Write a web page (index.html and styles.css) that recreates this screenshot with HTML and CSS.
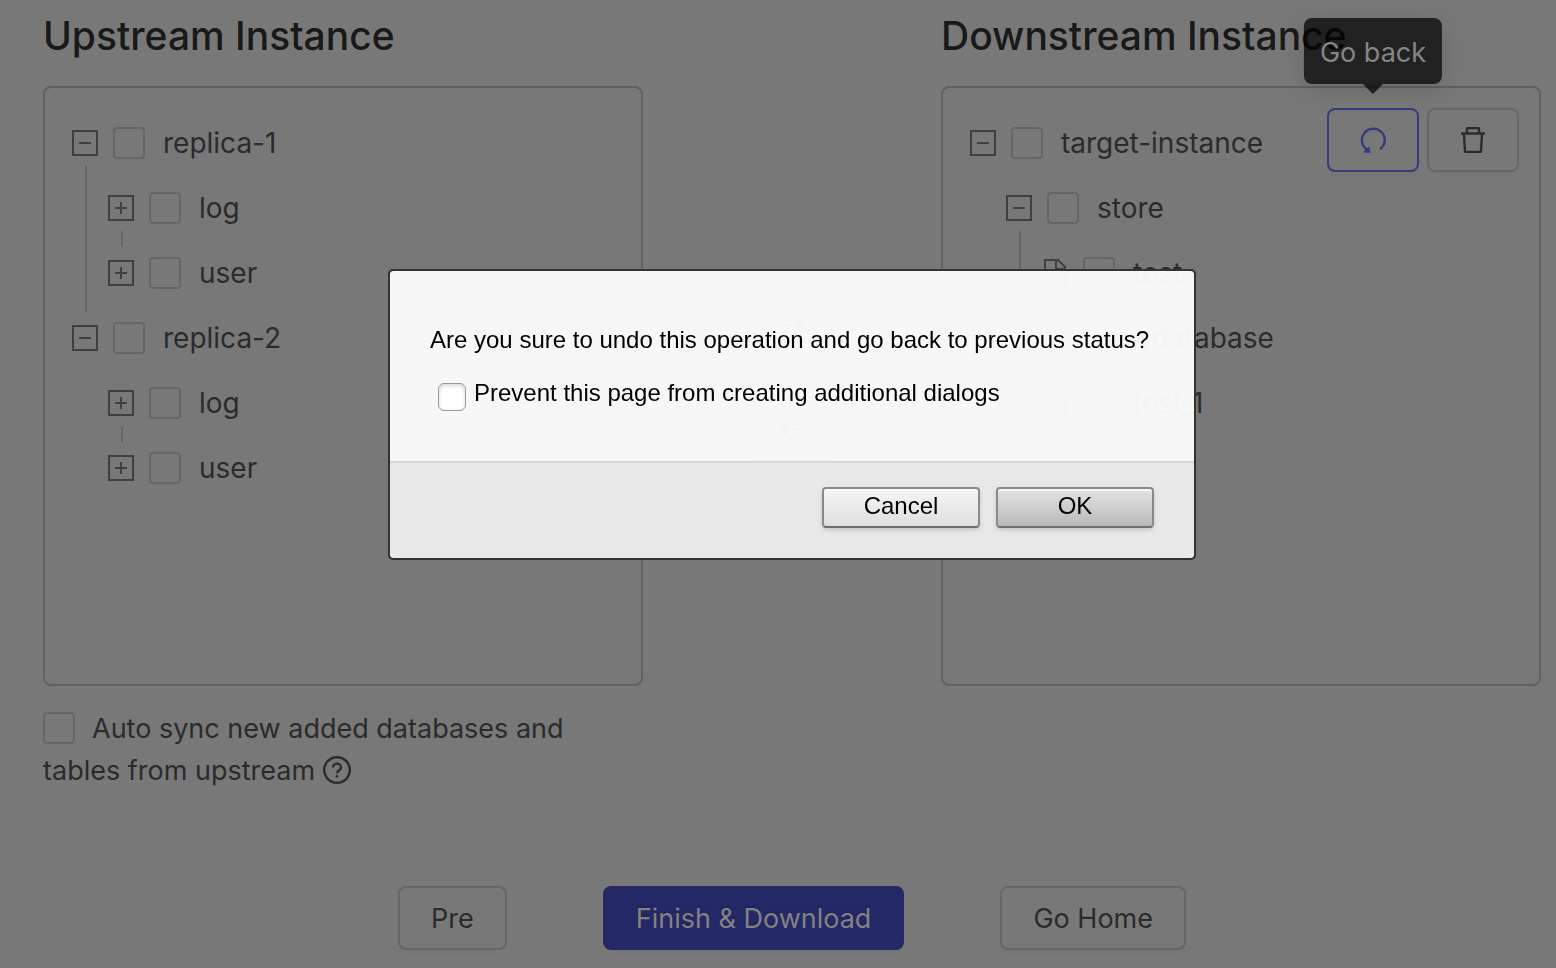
FILE: index.html
```html
<!DOCTYPE html>
<html lang="en">
<head>
<meta charset="utf-8">
<title>Sync instances</title>
<link rel="stylesheet" href="styles.css">
</head>
<body>
<svg class="sprite" aria-hidden="true">
  <symbol id="minus" viewBox="0 0 26 26"><rect x="1" y="1" width="24" height="24"/><path d="M7 13h12"/></symbol>
  <symbol id="plus" viewBox="0 0 26 26"><rect x="1" y="1" width="24" height="24"/><path d="M7 13h12M13 7v12"/></symbol>
  <symbol id="file" viewBox="0 0 26 28"><path d="M3 1h13l7 7v19H3zM14 1v9h9"/></symbol>
</svg>
<main class="page">
  <div class="transfer">
    <section class="column">
      <h1 class="title">Upstream Instance</h1>
      <div class="panel">
        <ul class="tree">
          <li class="node lined">
            <div class="row"><svg class="icon"><use href="#minus"/></svg><label class="item"><input class="check" type="checkbox">replica-1</label></div>
            <ul class="branch">
              <li class="node lined"><div class="row"><svg class="icon"><use href="#plus"/></svg><label class="item"><input class="check" type="checkbox">log</label></div></li>
              <li class="node"><div class="row"><svg class="icon"><use href="#plus"/></svg><label class="item"><input class="check" type="checkbox">user</label></div></li>
            </ul>
          </li>
          <li class="node">
            <div class="row"><svg class="icon"><use href="#minus"/></svg><label class="item"><input class="check" type="checkbox">replica-2</label></div>
            <ul class="branch">
              <li class="node lined"><div class="row"><svg class="icon"><use href="#plus"/></svg><label class="item"><input class="check" type="checkbox">log</label></div></li>
              <li class="node"><div class="row"><svg class="icon"><use href="#plus"/></svg><label class="item"><input class="check" type="checkbox">user</label></div></li>
            </ul>
          </li>
        </ul>
      </div>
      <p class="auto-sync">
        <input class="check" type="checkbox" id="auto"><label for="auto">Auto sync new added databases and tables from upstream</label>
        <svg class="help" viewBox="0 0 28 28"><circle cx="14" cy="14" r="12.8"/><path d="M10 11.5c0-5.2 8-5.2 8 0 0 2.8-4 2.7-4 6"/><circle class="dot" cx="14" cy="20.3" r="1.3"/></svg>
      </p>
    </section>

    <div class="moves">
      <button class="btn square" aria-label="Move right"><svg class="arrow" viewBox="0 0 24 24"><path d="M1 12h21M12 2l10 10-10 10"/></svg></button>
      <button class="btn square" aria-label="Move left"><svg class="arrow" viewBox="0 0 24 24"><path d="M23 12H2M12 2L2 12l10 10"/></svg></button>
    </div>

    <section class="column">
      <h1 class="title">Downstream Instance</h1>
      <div class="panel">
        <ul class="tree">
          <li class="node">
            <div class="row"><svg class="icon"><use href="#minus"/></svg><label class="item"><input class="check" type="checkbox">target-instance</label></div>
            <ul class="branch">
              <li class="node lined">
                <div class="row"><svg class="icon"><use href="#minus"/></svg><label class="item"><input class="check" type="checkbox">store</label></div>
                <ul class="branch">
                  <li class="node"><div class="row"><svg class="icon"><use href="#file"/></svg><label class="item"><input class="check" type="checkbox">test</label></div></li>
                </ul>
              </li>
              <li class="node">
                <div class="row"><svg class="icon"><use href="#minus"/></svg><label class="item"><input class="check" type="checkbox">newdatabase</label></div>
                <ul class="branch">
                  <li class="node"><div class="row"><svg class="icon"><use href="#file"/></svg><label class="item"><input class="check" type="checkbox">test_1</label></div></li>
                </ul>
              </li>
            </ul>
          </li>
        </ul>
        <div class="actions">
          <button class="btn square active" aria-label="Undo" aria-describedby="tip">
            <svg class="glyph" viewBox="0 0 26 26"><path d="M7.6 23A11.4 11.4 0 1 1 20 22.4"/><path class="fill" d="M8.8 20l1.200 5.400-6-.3z"/></svg>
            <span class="tooltip" role="tooltip" id="tip">Go back</span>
          </button>
          <button class="btn square" aria-label="Delete">
            <svg class="glyph" viewBox="0 0 26 26"><path d="M1 6.500h24M7 6V2q0-1 1-1h10q1 0 1 1v4M4 7l1 17q0 1 1 1h14q1 0 1-1l1-17"/></svg>
          </button>
        </div>
      </div>
    </section>
  </div>

  <footer class="footer">
    <button class="btn">Pre</button>
    <button class="btn primary">Finish &amp; Download</button>
    <button class="btn">Go Home</button>
  </footer>
</main>

<div class="overlay">
  <form class="dialog" role="alertdialog" aria-labelledby="question">
    <div class="dialog-body">
      <p class="question" id="question">Are you sure to undo this operation and go back to previous status?</p>
      <label class="prevent"><input class="native-check" type="checkbox">Prevent this page from creating additional dialogs</label>
    </div>
    <div class="dialog-foot">
      <button class="dialog-btn" type="button">Cancel</button>
      <button class="dialog-btn default" type="button">OK</button>
    </div>
  </form>
</div>
</body>
</html>
```

FILE: styles.css
```css
:root {
  --bg: #787878;
  --text: #2b2b2b;
  --line: #616161;
  --line-soft: #666;
  --blue: #343c7c;
}
* { box-sizing: border-box; }
body {
  margin: 0;
  background: var(--bg);
  color: var(--text);
  font: 27px/42px Inter, "Noto Sans", sans-serif;
}
ul { list-style: none; margin: 0; padding: 0; }
button, input { font: inherit; color: inherit; margin: 0; }
svg { fill: none; stroke: currentColor; stroke-width: 2; }
.sprite { display: none; }

.page { padding: 8px 15px 18px 43px; }
.transfer { display: grid; grid-template-columns: 600fr 298fr 600fr; }
.title {
  margin: 0 0 22px;
  color: #191919;
  font-size: 39px;
  font-weight: 500;
  line-height: 56px;
  white-space: nowrap;
}
.panel {
  display: flex;
  align-items: flex-start;
  min-height: 600px;
  padding: 20px;
  border: 2px solid var(--line);
  border-radius: 8px;
}
.tree { flex: 1; padding: 2px 7px; font-size: 28px; }
.branch { padding-left: 36px; }
.node { position: relative; }
.lined::after {
  content: "";
  position: absolute;
  top: 56px;
  bottom: -7px;
  left: 13px;
  width: 2px;
  background: var(--line-soft);
}
.row { display: flex; align-items: center; gap: 15px; height: 65px; }
.icon { width: 26px; height: 28px; color: #404040; }
.item { display: flex; align-items: center; gap: 18px; white-space: nowrap; }
.check {
  appearance: none;
  width: 32px;
  height: 32px;
  border: 2px solid var(--line-soft);
  border-radius: 4px;
}
.auto-sync { margin: 22px 0 0; }
.auto-sync .check { margin-right: 17px; vertical-align: -6px; }
.help { width: 28px; height: 28px; vertical-align: -4px; stroke-width: 2.4; }
.help .dot { fill: currentColor; stroke: none; }

.moves { display: flex; flex-direction: column; align-items: center; gap: 40px; padding-top: 285px; }
.arrow { width: 24px; height: 24px; }

.btn {
  position: relative;
  display: flex;
  align-items: center;
  justify-content: center;
  height: 64px;
  padding: 2px 31px 0;
  border: 2px solid var(--line-soft);
  border-radius: 8px;
  background: transparent;
  box-shadow: 0 4px 0 rgba(0, 0, 0, .01);
  white-space: nowrap;
}
.square { width: 92px; padding: 0; }
.active { border-color: var(--blue); color: var(--blue); }
.primary { border-color: #242867; background: #242867; color: #828282; text-shadow: 0 -2px 0 rgba(0, 0, 0, .12); }
.actions { display: flex; gap: 8px; }
.glyph { width: 26px; height: 26px; stroke-width: 2.4; }
.glyph .fill { fill: currentColor; stroke-width: 1; }
.tooltip {
  position: absolute;
  bottom: calc(100% + 26px);
  left: 50%;
  transform: translateX(-50%);
  padding: 14px 16px 10px;
  border-radius: 8px;
  background: rgba(0, 0, 0, .72);
  box-shadow: 0 6px 24px rgba(0, 0, 0, .12);
  color: #858585;
}
.tooltip::after {
  content: "";
  position: absolute;
  top: 100%;
  left: calc(50% - 10px);
  border: 10px solid transparent;
  border-top-color: rgba(0, 0, 0, .72);
  border-bottom: 0;
}
.footer { display: flex; justify-content: center; gap: 96px; margin-top: 94px; }

.overlay {
  position: fixed;
  inset: 0;
  display: flex;
  justify-content: center;
  align-items: flex-start;
  padding: 269px 15px 0 43px;
}
.dialog {
  min-width: 808px;
  border: 2px solid #333;
  border-radius: 5px;
  background: rgba(251, 251, 251, .97);
  background-clip: padding-box;
  color: #000;
  font: 24px/28px "Liberation Sans", Arial, sans-serif;
}
.dialog-body { padding: 55px 40px 50px; }
.question { margin: 0 0 25px; }
.prevent { display: flex; align-items: flex-start; gap: 8px; padding-left: 8px; }
.native-check {
  appearance: none;
  width: 28px;
  height: 28px;
  margin-top: 4px;
  border: 1px solid #999;
  border-radius: 6px;
  background: #fff;
  box-shadow: inset 0 2px 4px rgba(0, 0, 0, .15);
}
.dialog-foot {
  display: flex;
  justify-content: flex-end;
  gap: 16px;
  padding: 24px 40px 30px;
  border-top: 2px solid #d7d7d7;
  background: rgba(0, 0, 0, .06);
}
.dialog-btn {
  width: 158px;
  height: 41px;
  padding: 0 0 4px;
  border: 2px solid #8a8a8a;
  border-bottom-color: #6e6e6e;
  border-radius: 4px;
  background: linear-gradient(#f6f6f6, #dedede);
  box-shadow: 0 2px 4px rgba(0, 0, 0, .15), inset 0 2px 0 rgba(255, 255, 255, .7);
}
.default { background: linear-gradient(#e4e4e4, #b8b8b8); }
```
